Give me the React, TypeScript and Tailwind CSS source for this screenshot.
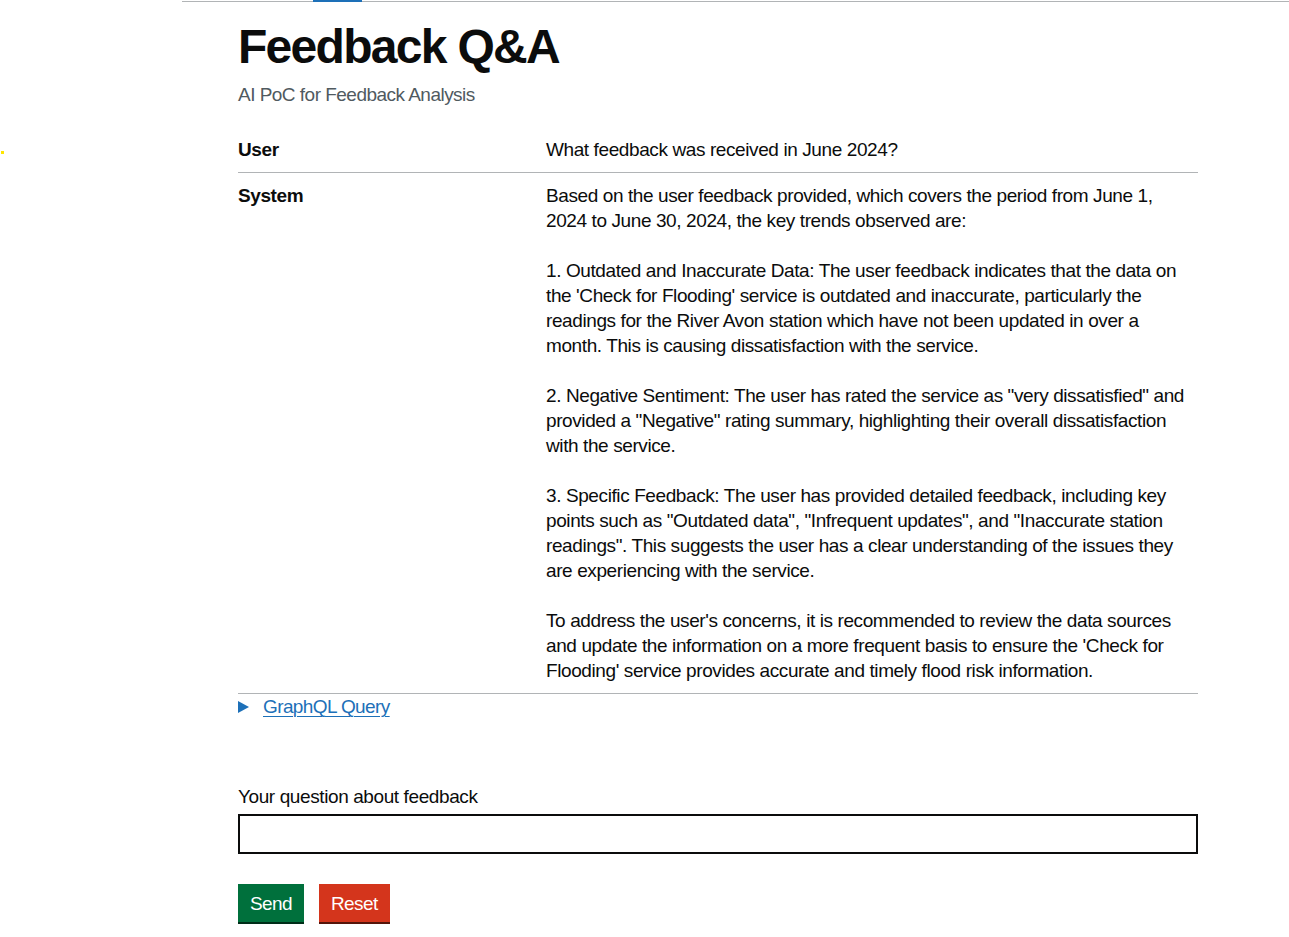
import React from "react";

const answer = [
  "Based on the user feedback provided, which covers the period from June 1, 2024 to June 30, 2024, the key trends observed are:",
  "1. Outdated and Inaccurate Data: The user feedback indicates that the data on the 'Check for Flooding' service is outdated and inaccurate, particularly the readings for the River Avon station which have not been updated in over a month. This is causing dissatisfaction with the service.",
  '2. Negative Sentiment: The user has rated the service as "very dissatisfied" and provided a "Negative" rating summary, highlighting their overall dissatisfaction with the service.',
  '3. Specific Feedback: The user has provided detailed feedback, including key points such as "Outdated data", "Infrequent updates", and "Inaccurate station readings". This suggests the user has a clear understanding of the issues they are experiencing with the service.',
  "To address the user's concerns, it is recommended to review the data sources and update the information on a more frequent basis to ensure the 'Check for Flooding' service provides accurate and timely flood risk information.",
];

function SummaryRow({ label, children }: { label: string; children: React.ReactNode }) {
  return (
    <div className="grid grid-cols-[308px_652px] border-b border-[#b1b4b6]">
      <dt className="py-[10px] pr-[20px] font-bold">{label}</dt>
      <dd className="py-[10px]">{children}</dd>
    </div>
  );
}

export default function App() {
  return (
    <div className="relative min-h-screen bg-white text-[#0b0c0c] font-['Liberation_Sans',Arial,sans-serif] text-[19px] leading-[25px] tracking-[-0.4px]">
      {/* focus leftover on the far left */}
      <div className="absolute left-[1px] top-[151px] w-[3px] h-[3px] bg-[#ffe600]" />

      {/* service nav strip */}
      <div className="relative ml-[182px] h-[2px]">
        <div className="absolute inset-x-0 bottom-0 h-px bg-[#b1b4b6]" />
        <div className="absolute top-0 left-[131px] w-[49px] h-[2px] bg-[#1d70b8]" />
      </div>

      <main className="ml-[238px] w-[960px] pt-[20px]">
        <h1 className="text-[48px] leading-[50px] font-bold tracking-[-1.7px]">Feedback Q&amp;A</h1>
        <p className="mt-[10px] text-[#505a5f] tracking-[-0.52px]">AI PoC for Feedback Analysis</p>

        <dl className="mt-[20px]">
          <SummaryRow label="User">What feedback was received in June 2024?</SummaryRow>
          <SummaryRow label="System">
            {answer.map((para, i) => (
              <p key={i} className={i < answer.length - 1 ? "mb-[25px]" : ""}>
                {para}
              </p>
            ))}
          </SummaryRow>
        </dl>

        <details>
          <summary className="relative inline-block cursor-pointer pl-[25px] list-none">
            <span className="absolute left-0 top-[7px] w-0 h-0 border-y-[6px] border-y-transparent border-l-[11px] border-l-[#1d70b8]" />
            <span className="text-[#1d70b8] underline underline-offset-[3px] decoration-1 tracking-[-0.6px]">GraphQL Query</span>
          </summary>
        </details>

        <form className="mt-[65px]">
          <label htmlFor="question" className="block mb-[5px]">
            Your question about feedback
          </label>
          <input
            id="question"
            type="text"
            className="block w-full h-[40px] border-2 border-[#0b0c0c] px-[5px] outline-none"
          />
          <div className="mt-[30px] flex gap-[15px]">
            <button
              type="submit"
              className="bg-[#00703c] text-white px-[10px] pt-[8px] pb-[7px] border-2 border-transparent leading-[19px] tracking-[-0.6px] shadow-[0_2px_0_#002d18]"
            >
              Send
            </button>
            <button
              type="button"
              className="bg-[#d4351c] text-white px-[10px] pt-[8px] pb-[7px] border-2 border-transparent leading-[19px] tracking-[-0.6px] shadow-[0_2px_0_#55150b]"
            >
              Reset
            </button>
          </div>
        </form>
      </main>
    </div>
  );
}
